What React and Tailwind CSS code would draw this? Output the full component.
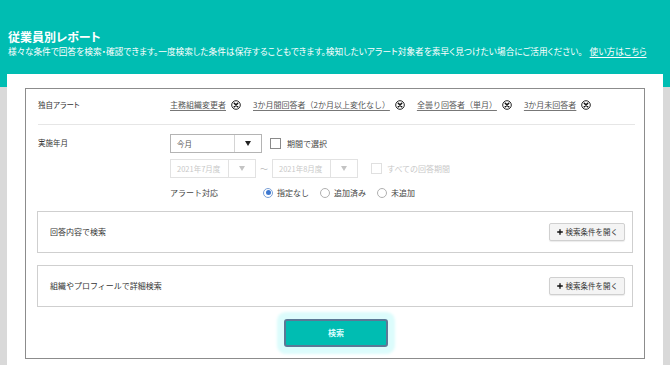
import { Plus } from "lucide-react";

const font = "[font-family:'Noto_Sans_CJK_JP','Noto_Sans',sans-serif]";
const palt = "[font-feature-settings:'palt']";

const CloseMark = () => (
  <svg width="10" height="10" viewBox="0 0 10 10" className="shrink-0">
    <circle cx="5" cy="5" r="4.3" fill="#fff" stroke="#222" strokeWidth="1" />
    <path d="M3.3 3.3 L6.7 6.7 M6.7 3.3 L3.3 6.7" stroke="#111" strokeWidth="1.6" strokeLinecap="round" />
  </svg>
);

const Arrow = ({ disabled }) => (
  <svg width="6" height="5" viewBox="0 0 6 5">
    <path d="M0 0 H6 L3 5 Z" fill={disabled ? "#c4c4c4" : "#222"} />
  </svg>
);

const Tag = ({ label }) => (
  <div className="flex items-center gap-[5px] mr-[12px]">
    <span className="underline underline-offset-2 decoration-[#777] text-[#555]">{label}</span>
    <CloseMark />
  </div>
);

const Select = ({ value, disabled, w = "w-[92px]" }) => (
  <div
    className={`flex ${w} h-[19px] border bg-white ${
      disabled ? "border-[#e2e2e2] text-[#c8c8c8]" : "border-[#b4b4b4] text-[#555]"
    }`}
  >
    <div className="flex-1 flex items-center pl-[6px] text-[7.5px]">{value}</div>
    <div
      className={`w-[27px] flex items-center justify-center border-l ${
        disabled ? "border-[#e2e2e2]" : "border-[#d4d4d4]"
      }`}
    >
      <Arrow disabled={disabled} />
    </div>
  </div>
);

const Checkbox = ({ disabled }) => (
  <div className={`w-[11px] h-[11px] border bg-white ${disabled ? "border-[#e0e0e0]" : "border-[#8a8a8a]"}`} />
);

const Radio = ({ checked, label }) => (
  <div className="flex items-center gap-[4px]">
    <div
      className={`w-[10px] h-[10px] rounded-full border bg-white flex items-center justify-center ${
        checked ? "border-[#7aa0d6]" : "border-[#b0b0b0]"
      }`}
    >
      {checked && <div className="w-[5px] h-[5px] rounded-full bg-[#3d78d0]" />}
    </div>
    <span className="text-[#444]">{label}</span>
  </div>
);

const SubSearch = ({ title }) => (
  <div className="mx-[11px] h-[42px] border border-[#cfcfcf] flex items-center justify-between pl-[12px] pr-[7px]">
    <span className="text-[8px] text-[#333]">{title}</span>
    <button className="h-[18px] px-[6px] flex items-center gap-[2px] bg-[#f4f4f4] border border-[#d0d0d0] rounded-[2px] text-[7.5px] text-[#333] shadow-[0_1px_1px_rgba(0,0,0,0.08)]">
      <Plus size={8} strokeWidth={4} className="text-[#111]" />
      検索条件を開く
    </button>
  </div>
);

export default function App() {
  return (
    <div className={`w-[670px] h-[365px] overflow-hidden bg-[#d9d9d9] ${font}`}>
      <div className={`h-[87px] bg-[#00bdb2] px-[8px] pt-[29px] text-white ${palt}`}>
        <h1 className="text-[12px] font-bold leading-[16px]">従業員別レポート</h1>
        <p className="mt-[1px] text-[8.7px] leading-[12px] whitespace-nowrap">
          様々な条件で回答を検索・確認できます。一度検索した条件は保存することもできます。検知したいアラート対象者を素早く見つけたい場合にご活用ください。
          <span className="ml-[7px] underline underline-offset-2">使い方はこちら</span>
        </p>
      </div>

      <div className="-mt-[13px] mx-[7px] h-[300px] bg-white pt-[14px] pl-[18px] pr-[18px]">
        <div className="border border-[#8c8c8c] h-[271px] text-[8px] leading-[12px]">
          {/* 独自アラート */}
          <div className="h-[35px] pb-[4px] flex items-center pl-[12px]">
            <div className={`w-[132px] text-[7.5px] text-[#333] ${palt}`}>独自アラート</div>
            <div className="flex items-center">
              <Tag label="主務組織変更者" />
              <Tag label="3か月間回答者（2か月以上変化なし）" />
              <Tag label="全曇り回答者（単月）" />
              <Tag label="3か月未回答者" />
            </div>
          </div>
          <div className="ml-[12px] mr-[9px] h-px bg-[#e6e6e6]" />

          {/* 実施年月 */}
          <div className="flex pl-[12px] pt-[9px]">
            <div className={`w-[132px] pt-[3px] text-[7.5px] text-[#333] ${palt}`}>実施年月</div>
            <div className="flex flex-col">
              <div className="flex items-center">
                <Select value="今月" />
                <div className="ml-[8px] flex items-center gap-[6px]">
                  <Checkbox />
                  <span className="text-[#444]">期間で選択</span>
                </div>
              </div>
              <div className="mt-[6px] flex items-center">
                <Select value="2021年7月度" disabled w="w-[86px]" />
                <span className="mx-[4px] text-[#bbb]">～</span>
                <Select value="2021年8月度" disabled w="w-[86px]" />
                <div className="ml-[13px] flex items-center gap-[5px]">
                  <Checkbox disabled />
                  <span className="text-[#c8c8c8]">すべての回答期間</span>
                </div>
              </div>
              <div className="mt-[6px] h-[17px] flex items-center">
                <span className="w-[93px] text-[#444]">アラート対応</span>
                <div className="flex items-center gap-[11px]">
                  <Radio checked label="指定なし" />
                  <Radio label="追加済み" />
                  <Radio label="未追加" />
                </div>
              </div>
            </div>
          </div>

          <div className="mt-[10px] flex flex-col gap-[12px]">
            <SubSearch title="回答内容で検索" />
            <SubSearch title="組織やプロフィールで詳細検索" />
          </div>

          <div className="mt-[12px] flex justify-center">
            <button className="w-[104px] h-[28px] ml-[2px] bg-[#00bdb2] border-2 border-[#5c7896] rounded-[3px] text-[8px] font-bold text-[#dcffff] shadow-[0_0_3px_7px_#dcfcfc]">
              検索
            </button>
          </div>
        </div>
      </div>
    </div>
  );
}
